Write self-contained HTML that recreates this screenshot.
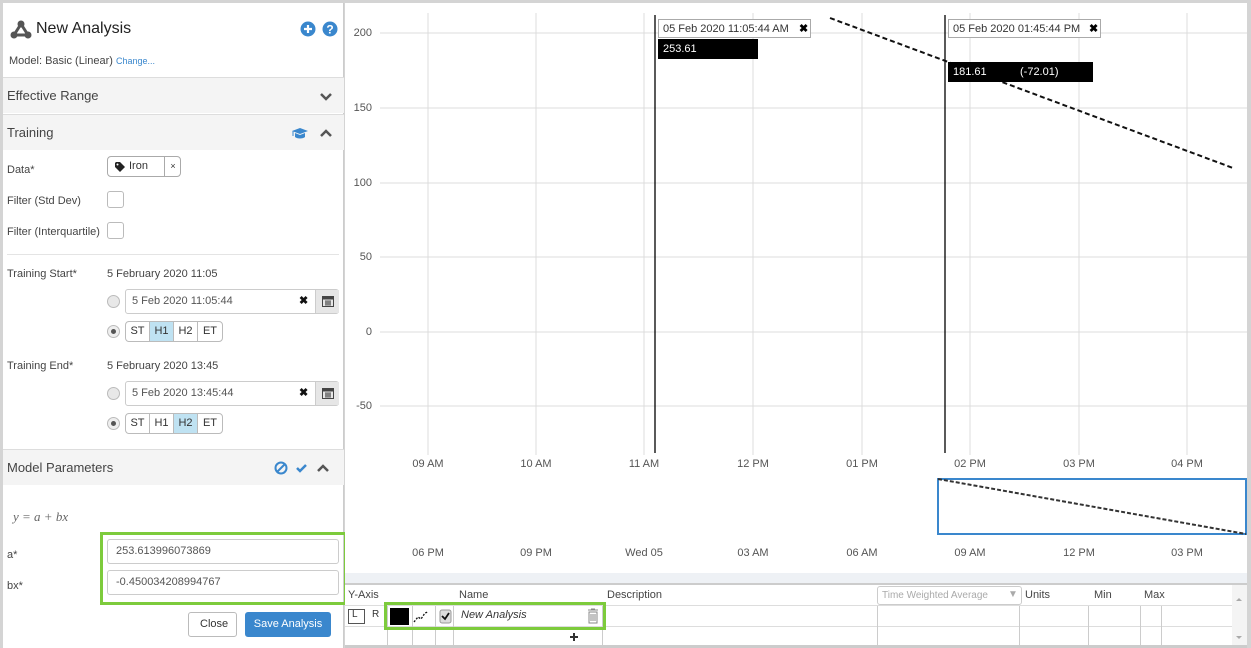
<!DOCTYPE html>
<html><head><style>
*{box-sizing:border-box;margin:0;padding:0}
body{width:1251px;height:648px;overflow:hidden;background:#d4d4d4;font-family:"Liberation Sans",sans-serif;font-size:12px;color:#333;position:relative}
.a{position:absolute}
#left{left:3px;top:3px;width:341px;height:645px;background:#fff;border-right:1px solid #ccc}
#right{left:345px;top:3px;width:902px;height:645px;background:#fff}
.sec{position:absolute;left:0;width:341px;height:36px;background:#f4f4f4;border-top:1px solid #ddd;font-size:13px;color:#444}
.sec span{position:absolute;left:4px;top:10px}
.lbl{position:absolute;left:4px;font-size:11px;color:#444}
.cb{position:absolute;width:17px;height:17px;border:1px solid #bbb;border-radius:3px;background:#fff}
.inp{position:absolute;border:1px solid #ccc;border-radius:3px;background:#fff;font-size:11px;color:#555}
.radio{position:absolute;width:13px;height:13px;border-radius:50%;border:1px solid #bbb;background:#e8e8e8}
.btng{position:absolute;height:21px;border:1px solid #bbb;border-radius:4px;display:flex;overflow:hidden;font-size:11px;background:#fff}
.btng div{width:24px;text-align:center;line-height:19px;border-right:1px solid #bbb}
.btng div:last-child{border-right:none}
.btng .on{background:#bfe2f2}
.xl{position:absolute;font-size:11px;color:#555;width:60px;text-align:center}
.yl{position:absolute;font-size:11px;color:#555;width:30px;text-align:right}
</style></head><body>
<div id="left" class="a">
 <svg class="a" style="left:7px;top:17px" width="22" height="20" viewBox="0 0 22 20"><line x1="11" y1="4" x2="4" y2="15" stroke="#555" stroke-width="3"/><line x1="11" y1="4" x2="18" y2="15" stroke="#555" stroke-width="3"/><line x1="4" y1="15" x2="18" y2="15" stroke="#555" stroke-width="3"/><circle cx="11" cy="4" r="3.5" fill="#555"/><circle cx="4" cy="15" r="3.5" fill="#555"/><circle cx="18" cy="15" r="3.5" fill="#555"/></svg>
 <div class="a" style="left:33px;top:17px;font-size:16px;color:#222">New Analysis</div>
 <svg class="a" style="left:297px;top:18px" width="40" height="16"><circle cx="8" cy="8" r="7.5" fill="#3a87cd"/><path d="M4 8h8M8 4v8" stroke="#fff" stroke-width="2.2"/><circle cx="30" cy="8" r="7.5" fill="#3a87cd"/><text x="30" y="12.5" font-size="12" font-weight="bold" fill="#fff" text-anchor="middle" font-family="Liberation Sans">?</text></svg>
 <div class="a" style="left:6px;top:52px;font-size:11px;color:#444">Model: Basic (Linear) <span style="color:#3a87cd;font-size:9px">Change...</span></div>
 <div class="sec" style="top:74px"><span>Effective Range</span><svg class="a" style="left:316px;top:14px" width="14" height="10"><path d="M2 2l5 5 5-5" stroke="#555" stroke-width="2.5" fill="none"/></svg></div>
 <div class="sec" style="top:111px"><span>Training</span>
  <svg class="a" style="left:288px;top:12px" width="18" height="12"><path d="M1 4l8-3 8 3-8 3z" fill="#3a87cd"/><path d="M4 6v4c2 2 8 2 10 0V6l-5 2z" fill="#3a87cd"/><path d="M2 4v5" stroke="#3a87cd"/></svg>
  <svg class="a" style="left:316px;top:13px" width="14" height="10"><path d="M2 8l5-5 5 5" stroke="#555" stroke-width="2.5" fill="none"/></svg></div>
 <div class="lbl" style="top:161px">Data*</div>
 <div class="inp" style="left:104px;top:153px;width:74px;height:21px;border-radius:4px;border-color:#aaa;color:#333"><svg class="a" style="left:7px;top:5px" width="10" height="10"><path d="M0 1v4l5 5 5-5-5-5H1z" fill="#222"/><circle cx="2.5" cy="2.5" r="1" fill="#fff"/></svg><span class="a" style="left:21px;top:3px">Iron</span><span class="a" style="left:56px;top:0;width:17px;height:19px;border-left:1px solid #aaa;text-align:center;line-height:18px;font-size:9px">×</span></div>
 <div class="lbl" style="top:192px">Filter (Std Dev)</div><div class="cb" style="left:104px;top:188px"></div>
 <div class="lbl" style="top:223px">Filter (Interquartile)</div><div class="cb" style="left:104px;top:219px"></div>
 <div class="a" style="left:4px;top:251px;width:332px;height:1px;background:#e4e4e4"></div>
 <div class="lbl" style="top:265px">Training Start*</div><div class="lbl" style="left:104px;top:265px">5 February 2020 11:05</div>
 <div class="radio" style="left:104px;top:292px"></div>
 <div class="inp" style="left:122px;top:286px;width:214px;height:25px"><span class="a" style="left:6px;top:5px">5 Feb 2020 11:05:44</span><span class="a" style="left:173px;top:4px;font-weight:bold;color:#111">✖</span><div class="a" style="left:189px;top:0;width:24px;height:23px;background:#e6e6e6;border-left:1px solid #ccc"><svg class="a" style="left:6px;top:5px" width="12" height="12"><rect x="0.5" y="1.5" width="11" height="10" fill="none" stroke="#444"/><rect x="0.5" y="1.5" width="11" height="3" fill="#444"/><path d="M3 7h6M3 9h6M4 5v6M6 5v6M8 5v6" stroke="#444" stroke-width=".8"/></svg></div></div>
 <div class="radio" style="left:104px;top:322px;background:#eee"><div class="a" style="left:3px;top:3px;width:5px;height:5px;border-radius:50%;background:#555"></div></div>
 <div class="btng" style="left:122px;top:318px"><div>ST</div><div class="on">H1</div><div>H2</div><div>ET</div></div>
 <div class="lbl" style="top:357px">Training End*</div><div class="lbl" style="left:104px;top:357px">5 February 2020 13:45</div>
 <div class="radio" style="left:104px;top:384px"></div>
 <div class="inp" style="left:122px;top:378px;width:214px;height:25px"><span class="a" style="left:6px;top:5px">5 Feb 2020 13:45:44</span><span class="a" style="left:173px;top:4px;font-weight:bold;color:#111">✖</span><div class="a" style="left:189px;top:0;width:24px;height:23px;background:#e6e6e6;border-left:1px solid #ccc"><svg class="a" style="left:6px;top:5px" width="12" height="12"><rect x="0.5" y="1.5" width="11" height="10" fill="none" stroke="#444"/><rect x="0.5" y="1.5" width="11" height="3" fill="#444"/><path d="M3 7h6M3 9h6M4 5v6M6 5v6M8 5v6" stroke="#444" stroke-width=".8"/></svg></div></div>
 <div class="radio" style="left:104px;top:414px;background:#eee"><div class="a" style="left:3px;top:3px;width:5px;height:5px;border-radius:50%;background:#555"></div></div>
 <div class="btng" style="left:122px;top:410px"><div>ST</div><div>H1</div><div class="on">H2</div><div>ET</div></div>
 <div class="sec" style="top:446px"><span>Model Parameters</span>
  <svg class="a" style="left:270px;top:10px" width="60" height="16"><circle cx="8" cy="8" r="5.5" fill="none" stroke="#3a87cd" stroke-width="2"/><path d="M4 12l8-8" stroke="#3a87cd" stroke-width="2"/><path d="M24 8l3 3 6-6" stroke="#3a87cd" stroke-width="2.5" fill="none"/><path d="M45 11l5-5 5 5" stroke="#555" stroke-width="2.5" fill="none"/></svg></div>
 <div class="a" style="left:10px;top:506px;font-size:13px;color:#666;font-style:italic;font-family:'Liberation Serif',serif">y = a + bx</div>
 <div class="a" style="left:97px;top:529px;width:247px;height:73px;border:3px solid #7dcb3c"></div>
 <div class="lbl" style="top:546px">a*</div><div class="inp" style="left:104px;top:536px;width:232px;height:25px"><span class="a" style="left:8px;top:5px">253.613996073869</span></div>
 <div class="lbl" style="top:577px">bx*</div><div class="inp" style="left:104px;top:567px;width:232px;height:25px"><span class="a" style="left:8px;top:5px">-0.450034208994767</span></div>
 <div class="inp" style="left:185px;top:609px;width:49px;height:25px;border-color:#bbb;color:#333"><span class="a" style="left:11px;top:5px">Close</span></div>
 <div class="a" style="left:242px;top:609px;width:86px;height:25px;background:#3a87cd;border-radius:3px;color:#fff;font-size:11px;text-align:center;line-height:25px">Save Analysis</div>
</div>
<div id="right" class="a"></div>
<svg class="a" style="left:345px;top:3px" width="902" height="570">
 <g stroke="#dcdcdc">
  <line x1="83" y1="10" x2="83" y2="452"/><line x1="191" y1="10" x2="191" y2="452"/><line x1="299" y1="10" x2="299" y2="452"/><line x1="408" y1="10" x2="408" y2="452"/><line x1="517" y1="10" x2="517" y2="452"/><line x1="625" y1="10" x2="625" y2="452"/><line x1="734" y1="10" x2="734" y2="452"/><line x1="842" y1="10" x2="842" y2="452"/>
  <line x1="35" y1="30" x2="902" y2="30"/><line x1="35" y1="105" x2="902" y2="105"/><line x1="35" y1="180" x2="902" y2="180"/><line x1="35" y1="254" x2="902" y2="254"/><line x1="35" y1="329" x2="902" y2="329"/><line x1="35" y1="403" x2="902" y2="403"/>
 </g>
 <line x1="310" y1="12" x2="310" y2="450" stroke="#000" stroke-width="1.3"/>
 <line x1="600" y1="12" x2="600" y2="450" stroke="#000" stroke-width="1.3"/>
 <line x1="485" y1="15" x2="888" y2="165" stroke="#111" stroke-width="2" stroke-dasharray="5,3"/>
 <rect x="593" y="476" width="308" height="55" fill="none" stroke="#3a87cd" stroke-width="2"/>
 <line x1="593" y1="476" x2="901" y2="531" stroke="#333" stroke-width="2" stroke-dasharray="4,2"/>
</svg>
<div class="a" style="left:658px;top:19px;width:153px;height:19px;border:1px solid #aaa;background:#fff;font-size:11px;padding:3px 4px;color:#333">05 Feb 2020 11:05:44 AM<b class="a" style="left:140px;top:2px;color:#000">✖</b></div>
<div class="a" style="left:658px;top:39px;width:100px;height:20px;background:#000;color:#fff;font-size:11px;padding:4px 5px">253.61</div>
<div class="a" style="left:948px;top:19px;width:153px;height:19px;border:1px solid #aaa;background:#fff;font-size:11px;padding:3px 4px;color:#333">05 Feb 2020 01:45:44 PM<b class="a" style="left:140px;top:2px;color:#000">✖</b></div>
<div class="a" style="left:948px;top:62px;width:145px;height:20px;background:#000;color:#fff;font-size:11px;padding:4px 5px">181.61<span class="a" style="left:72px;top:4px">(-72.01)</span></div>
<div class="yl" style="left:342px;top:27px">200</div><div class="yl" style="left:342px;top:102px">150</div><div class="yl" style="left:342px;top:177px">100</div><div class="yl" style="left:342px;top:251px">50</div><div class="yl" style="left:342px;top:326px">0</div><div class="yl" style="left:342px;top:400px">-50</div>
<div class="xl" style="left:398px;top:458px">09 AM</div><div class="xl" style="left:506px;top:458px">10 AM</div><div class="xl" style="left:614px;top:458px">11 AM</div><div class="xl" style="left:723px;top:458px">12 PM</div><div class="xl" style="left:832px;top:458px">01 PM</div><div class="xl" style="left:940px;top:458px">02 PM</div><div class="xl" style="left:1049px;top:458px">03 PM</div><div class="xl" style="left:1157px;top:458px">04 PM</div>
<div class="xl" style="left:398px;top:547px">06 PM</div><div class="xl" style="left:506px;top:547px">09 PM</div><div class="xl" style="left:614px;top:547px">Wed 05</div><div class="xl" style="left:723px;top:547px">03 AM</div><div class="xl" style="left:832px;top:547px">06 AM</div><div class="xl" style="left:940px;top:547px">09 AM</div><div class="xl" style="left:1049px;top:547px">12 PM</div><div class="xl" style="left:1157px;top:547px">03 PM</div>
<div class="a" style="left:345px;top:573px;width:902px;height:10px;background:#eef1f5"></div>
<div class="a" style="left:345px;top:583px;width:902px;height:2px;background:#ccc"></div>
<div class="a" style="left:345px;top:645px;width:902px;height:3px;background:#ccc"></div>
<svg class="a" style="left:345px;top:585px" width="902" height="60">
 <g stroke="#ddd"><line x1="0" y1="20.5" x2="887" y2="20.5"/><line x1="0" y1="41.5" x2="887" y2="41.5"/></g>
 <g stroke="#ccc"><line x1="42.5" y1="21" x2="42.5" y2="60"/><line x1="67.5" y1="21" x2="67.5" y2="60"/><line x1="90.5" y1="21" x2="90.5" y2="60"/><line x1="108.5" y1="21" x2="108.5" y2="60"/><line x1="257.5" y1="21" x2="257.5" y2="60"/><line x1="532.5" y1="21" x2="532.5" y2="60"/><line x1="674.5" y1="21" x2="674.5" y2="60"/><line x1="743.5" y1="21" x2="743.5" y2="60"/><line x1="795.5" y1="21" x2="795.5" y2="60"/><line x1="816.5" y1="21" x2="816.5" y2="60"/></g>
 <rect x="887" y="0" width="15" height="60" fill="#f4f4f4"/>
 <path d="M891 16l3-3 3 3z" fill="#aaa"/><path d="M891 51l3 3 3-3z" fill="#aaa"/>
 <rect x="3.5" y="24.5" width="16" height="14" fill="#fff" stroke="#555"/>
 <rect x="45" y="23" width="19" height="17" fill="#000"/>
 <path d="M69 37l4-5 3 2 4-6 3-1" stroke="#111" stroke-dasharray="2,1.5" fill="none" stroke-width="1.3"/>
 <rect x="95" y="25" width="11" height="13" fill="#ddd" stroke="#999" rx="2"/><path d="M97 31l3 3 4-6" stroke="#111" stroke-width="1.8" fill="none"/>
 <path d="M243 25h10M246 24h4M244 27h8v11h-8z" stroke="#888" fill="none"/><path d="M246 29v7M248 29v7M250 29v7" stroke="#888"/>
 <path d="M225 52h8M229 48v8" stroke="#333" stroke-width="2"/>
</svg>
<div class="a" style="left:348px;top:589px;font-size:11px;color:#444">Y-Axis</div>
<div class="a" style="left:459px;top:589px;font-size:11px;color:#444">Name</div>
<div class="a" style="left:607px;top:589px;font-size:11px;color:#444">Description</div>
<div class="a" style="left:877px;top:586px;width:145px;height:19px;border:1px solid #ccc;border-radius:3px;font-size:10px;color:#aaa;padding:3px 4px">Time Weighted Average<span class="a" style="left:130px;top:2px">▼</span></div>
<div class="a" style="left:1025px;top:589px;font-size:11px;color:#444">Units</div>
<div class="a" style="left:1094px;top:589px;font-size:11px;color:#444">Min</div>
<div class="a" style="left:1144px;top:589px;font-size:11px;color:#444">Max</div>
<div class="a" style="left:352px;top:609px;font-size:10px;color:#333">L</div>
<div class="a" style="left:372px;top:609px;font-size:10px;color:#333">R</div>
<div class="a" style="left:461px;top:609px;font-size:11px;color:#333;font-style:italic">New Analysis</div>
<div class="a" style="left:384px;top:602px;width:222px;height:28px;border:3px solid #7dcb3c"></div>
</body></html>
